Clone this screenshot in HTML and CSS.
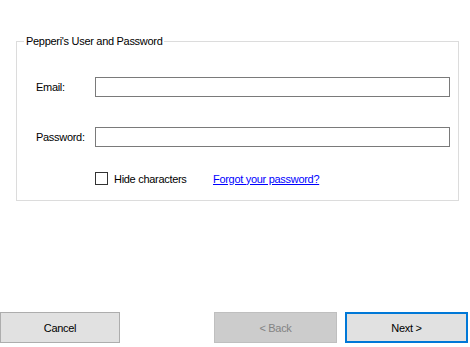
FILE: index.html
```html
<!DOCTYPE html>
<html>
<head>
<meta charset="utf-8">
<link rel="stylesheet" href="styles.css">
</head>
<body>
<div class="page">
  <fieldset class="group">
    <legend class="group-title">Pepperi's User and Password</legend>
    <div class="row row-email">
      <label class="field-label">Email:</label>
      <div class="textbox"></div>
    </div>
    <div class="row row-password">
      <label class="field-label">Password:</label>
      <div class="textbox"></div>
    </div>
    <div class="row row-options">
      <span class="checkbox"></span>
      <span class="check-text">Hide characters</span>
      <a class="link" href="#">Forgot your password?</a>
    </div>
  </fieldset>
  <div class="buttons">
    <div class="btn btn-cancel">Cancel</div>
    <div class="btn btn-back">&lt; Back</div>
    <div class="btn btn-next">Next &gt;</div>
  </div>
</div>
</body>
</html>
```
FILE: styles.css
```css
html, body {
  margin: 0;
  padding: 0;
  background: #ffffff;
}
body {
  font-family: "Liberation Sans", Arial, sans-serif;
  font-size: 11px;
  letter-spacing: -0.3px;
  color: #000;
}
.page {
  width: 470px;
  height: 347px;
  box-sizing: border-box;
  padding-top: 34px;
  display: flex;
  flex-direction: column;
}
.group {
  margin: 0 0 0 16px;
  width: 443px;
  height: 167px;
  box-sizing: border-box;
  border: 1px solid #dcdcdc;
  padding: 0;
  min-width: 0;
}
.group-title {
  margin-left: 7px;
  padding: 0 2px 0 2px;
  line-height: 14px;
}
.row {
  display: flex;
  align-items: center;
}
.row-email {
  margin-top: 29px;
  height: 20px;
}
.row-password {
  margin-top: 30px;
  height: 20px;
}
.row-options {
  margin-top: 25px;
  height: 13px;
  padding-left: 78px;
}
.field-label {
  width: 59px;
  padding-left: 19px;
  box-sizing: content-box;
}
.textbox {
  width: 355px;
  height: 20px;
  box-sizing: border-box;
  border: 1px solid #7a7a7a;
  background: #fff;
}
.checkbox {
  width: 13px;
  height: 13px;
  box-sizing: border-box;
  border: 1px solid #333333;
  background: #fff;
}
.check-text {
  margin-left: 6px;
  width: 99px;
}
.link {
  color: #0000ff;
  text-decoration: underline;
}
.buttons {
  margin-top: auto;
  margin-bottom: 4px;
  height: 31px;
  display: flex;
}
.btn {
  height: 31px;
  box-sizing: border-box;
  border: 1px solid #adadad;
  background: #e1e1e1;
  display: flex;
  align-items: center;
  justify-content: center;
}
.btn-cancel {
  width: 120px;
}
.btn-back {
  width: 123px;
  margin-left: 94px;
  background: #cccccc;
  border-color: #bfbfbf;
  color: #838383;
}
.btn-next {
  width: 123px;
  margin-left: 8px;
  border: 2px solid #0078d7;
}
```
